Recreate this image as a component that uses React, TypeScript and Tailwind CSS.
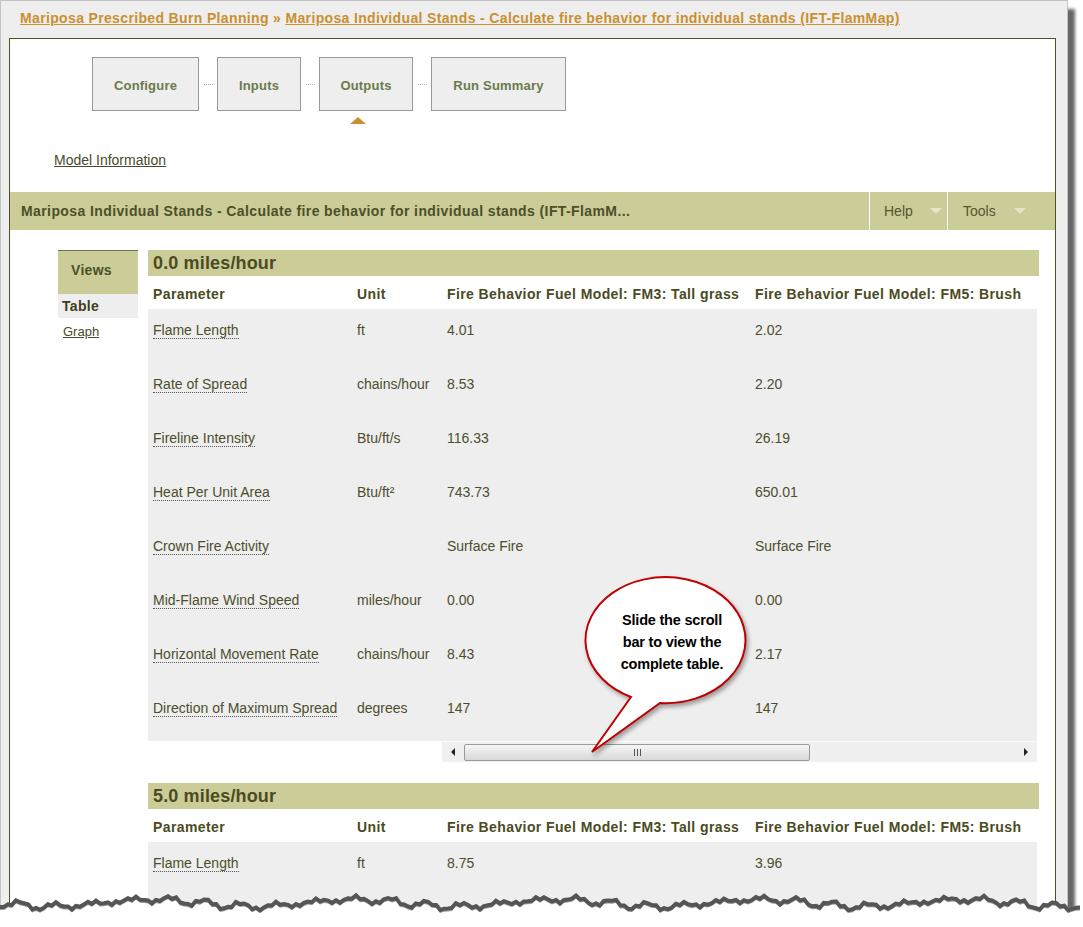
import React from 'react';

const rows = [
  ['Flame Length', 'ft', '4.01', '2.02'],
  ['Rate of Spread', 'chains/hour', '8.53', '2.20'],
  ['Fireline Intensity', 'Btu/ft/s', '116.33', '26.19'],
  ['Heat Per Unit Area', 'Btu/ft²', '743.73', '650.01'],
  ['Crown Fire Activity', '', 'Surface Fire', 'Surface Fire'],
  ['Mid-Flame Wind Speed', 'miles/hour', '0.00', '0.00'],
  ['Horizontal Movement Rate', 'chains/hour', '8.43', '2.17'],
  ['Direction of Maximum Spread', 'degrees', '147', '147'],
];

const steps = [
  { label: 'Configure', w: 'w-[107px]' },
  { label: 'Inputs', w: 'w-[84px]' },
  { label: 'Outputs', w: 'w-[94px]', active: true },
  { label: 'Run Summary', w: 'w-[135px]' },
];

const HeaderRow = () => (
  <div className="grid grid-cols-[204px_90px_308px_1fr] h-[33px] pt-[10px] leading-[16px] bg-white text-[14px] font-bold tracking-[0.4px] text-[#4b4b22]">
    <div className="pl-[5px]">Parameter</div>
    <div className="pl-[5px]">Unit</div>
    <div className="pl-[5px]">Fire Behavior Fuel Model: FM3: Tall grass</div>
    <div className="pl-[5px]">Fire Behavior Fuel Model: FM5: Brush</div>
  </div>
);

const DataRow = ({ r }: { r: string[] }) => (
  <div className="grid grid-cols-[204px_90px_308px_1fr] h-[54px] pt-[13px] bg-[#eeeeee] mr-[2px] text-[14px] leading-[16px] text-[#4d4d2b]">
    <div className="pl-[5px]">
      <span className="border-b border-dotted border-[#555]">{r[0]}</span>
    </div>
    <div className="pl-[5px]">{r[1]}</div>
    <div className="pl-[5px]">{r[2]}</div>
    <div className="pl-[5px]">{r[3]}</div>
  </div>
);

const Scrollbar = () => (
  <div className="flex">
    <div className="w-[294px] bg-white" />
    <div className="flex items-center w-[595px] h-[21px] bg-[#f0f0f0] border-t border-[#fafafa]">
      <div className="w-[22px] flex justify-center">
        <div className="w-0 h-0 border-y-[4px] border-y-transparent border-r-[4px] border-r-[#222]" />
      </div>
      <div className="w-[346px] h-[17px] rounded-[2px] border border-[#9a9a9a] bg-gradient-to-b from-[#f6f6f6] to-[#d8d8d8] flex items-center justify-center gap-[2px]">
        <div className="w-px h-[7px] bg-[#555]" />
        <div className="w-px h-[7px] bg-[#555]" />
        <div className="w-px h-[7px] bg-[#555]" />
      </div>
      <div className="flex-1" />
      <div className="w-[22px] flex justify-center">
        <div className="w-0 h-0 border-y-[4px] border-y-transparent border-l-[4px] border-l-[#222]" />
      </div>
    </div>
  </div>
);

const Bubble = () => (
  <div className="absolute left-[580px] top-[572px] w-[180px] h-[190px]">
    <svg className="absolute inset-0 drop-shadow-[2px_3px_2px_rgba(0,0,0,0.35)]" width="180" height="190" viewBox="0 0 180 190">
      <path
        d="M51 125 L12 180 L80 131 A80 63 0 1 0 51 125 Z"
        fill="white"
        stroke="#c00000"
        strokeWidth="2"
        strokeLinejoin="miter"
      />
    </svg>
    <div className="absolute left-[17px] top-[37px] w-[150px] text-center text-[14.5px] leading-[22px] font-bold text-black tracking-[-0.2px]">
      Slide the scroll
      <br />
      bar to view the
      <br />
      complete table.
    </div>
  </div>
);

const TornEdge = () => {
  const pts: [number, number][] = [];
  for (let x = 0; x <= 1083; x += 4) {
    const y =
      13 +
      3.5 * Math.sin(x * 0.031) +
      2.5 * Math.sin(x * 0.17 + 1.3) +
      1.6 * Math.sin(x * 0.63 + 0.4) +
      1.0 * Math.sin(x * 1.37 + 2.1);
    pts.push([x, y]);
  }
  const line = pts.map((p, i) => `${i ? 'L' : 'M'}${p[0]} ${p[1].toFixed(1)}`).join(' ');
  const fill = pts.map((p, i) => `${i ? 'L' : 'M'}${p[0]} ${(p[1] + 3).toFixed(1)}`).join(' ') + ' L1083 40 L0 40 Z';
  return (
    <svg className="absolute left-0 top-[890px]" width="1083" height="40" viewBox="0 0 1083 40">
      <path d={line} fill="none" stroke="#9a9a9a" strokeWidth="7" transform="translate(0 2)" />
      <path d={line} fill="none" stroke="#555" strokeWidth="4" />
      <path d={fill} fill="white" />
    </svg>
  );
};

const Section = ({ title, children }: { title: string; children: React.ReactNode }) => (
  <div>
    <div className="h-[26px] bg-[#cccc99] pl-[5px] flex items-center text-[18px] font-bold tracking-[0.15px] text-[#4b4b22]">{title}</div>
    <HeaderRow />
    {children}
  </div>
);

export default function App() {
  return (
    <div className="relative w-[1083px] h-[927px] bg-white overflow-hidden font-['Liberation_Sans',Arial,sans-serif]">
      <div className="w-[1068px] h-[940px] bg-[#eeeeee] border-l border-t border-r border-[#c4c4c4] shadow-[7px_9px_3px_rgba(0,0,0,0.6)]">
        {/* breadcrumb */}
        <div className="h-[37px] pl-[19px] pt-[7px] text-[14px] font-bold tracking-[0.35px] text-[#c9902f]">
          <a className="underline">Mariposa Prescribed Burn Planning</a>
          <span> » </span>
          <a className="underline">Mariposa Individual Stands - Calculate fire behavior for individual stands (IFT-FlamMap)</a>
        </div>

        {/* main panel */}
        <div className="ml-[8px] w-[1047px] h-[900px] bg-white border border-[#4b5320]">
          {/* steps */}
          <div className="flex items-center pl-[82px] pt-[18px]">
            {steps.map((s, i) => (
              <React.Fragment key={s.label}>
                {i > 0 && (
                  <div className="flex justify-center w-[18px]">
                    <div className="w-[9px] border-t border-dotted border-[#aaa]" />
                  </div>
                )}
                <div className="relative">
                  <div className={`${s.w} h-[54px] pt-[4px] bg-[#eeeeee] border border-[#999] flex items-center justify-center text-[13px] font-bold tracking-[0.2px] text-[#6b7a4a]`}>
                    {s.label}
                  </div>
                  {s.active && (
                    <div className="absolute left-[31px] top-[60px] w-0 h-0 border-x-[8px] border-x-transparent border-b-[7px] border-b-[#c9902f]" />
                  )}
                </div>
              </React.Fragment>
            ))}
          </div>

          {/* model info */}
          <div className="pl-[44px] pt-[39px] h-[81px] text-[14px] text-[#4a4a2a]">
            <a className="underline">Model Information</a>
          </div>

          {/* title bar */}
          <div className="flex h-[38px] bg-[#cccc99] text-[14px] text-[#4b5028]">
            <div className="flex-1 pl-[11px] flex items-center font-bold tracking-[0.4px]">
              Mariposa Individual Stands - Calculate fire behavior for individual stands (IFT-FlamM...
            </div>
            <div className="w-[78px] border-l border-white flex items-center pl-[14px] gap-[17px] text-[#55552f]">
              Help
              <div className="w-0 h-0 border-x-[6px] border-x-transparent border-t-[6px] border-t-[#e4e4c8]" />
            </div>
            <div className="w-[108px] border-l border-white flex items-center pl-[15px] gap-[18px] text-[#55552f]">
              Tools
              <div className="w-0 h-0 border-x-[6px] border-x-transparent border-t-[6px] border-t-[#e4e4c8]" />
            </div>
          </div>

          {/* body */}
          <div className="flex pt-[20px] pl-[48px]">
            {/* views */}
            <div className="w-[80px] mr-[10px] border-t border-[#6b7a4a]">
              <div className="h-[43px] bg-[#cccc99] pl-[13px] pt-[11px] leading-[16px] text-[14px] font-bold tracking-[0.3px] text-[#4b5028]">Views</div>
              <div className="h-[24px] bg-[#eeeeee] pl-[4px] flex items-center text-[14px] font-bold tracking-[0.3px] text-[#3f3f1e]">Table</div>
              <div className="pl-[5px] pt-[4px] text-[13px] text-[#4a4a2a]">
                <a className="underline">Graph</a>
              </div>
            </div>

            {/* results */}
            <div className="relative w-[891px]">
              <Section title="0.0 miles/hour">
                {rows.map((r) => (
                  <DataRow key={r[0]} r={r} />
                ))}
                <Scrollbar />
              </Section>
              <div className="h-[21px]" />
              <Section title="5.0 miles/hour">
                <DataRow r={['Flame Length', 'ft', '8.75', '3.96']} />
                <DataRow r={['', '', '', '']} />
              </Section>
            </div>
          </div>
        </div>
      </div>

      <Bubble />
      <TornEdge />
    </div>
  );
}
